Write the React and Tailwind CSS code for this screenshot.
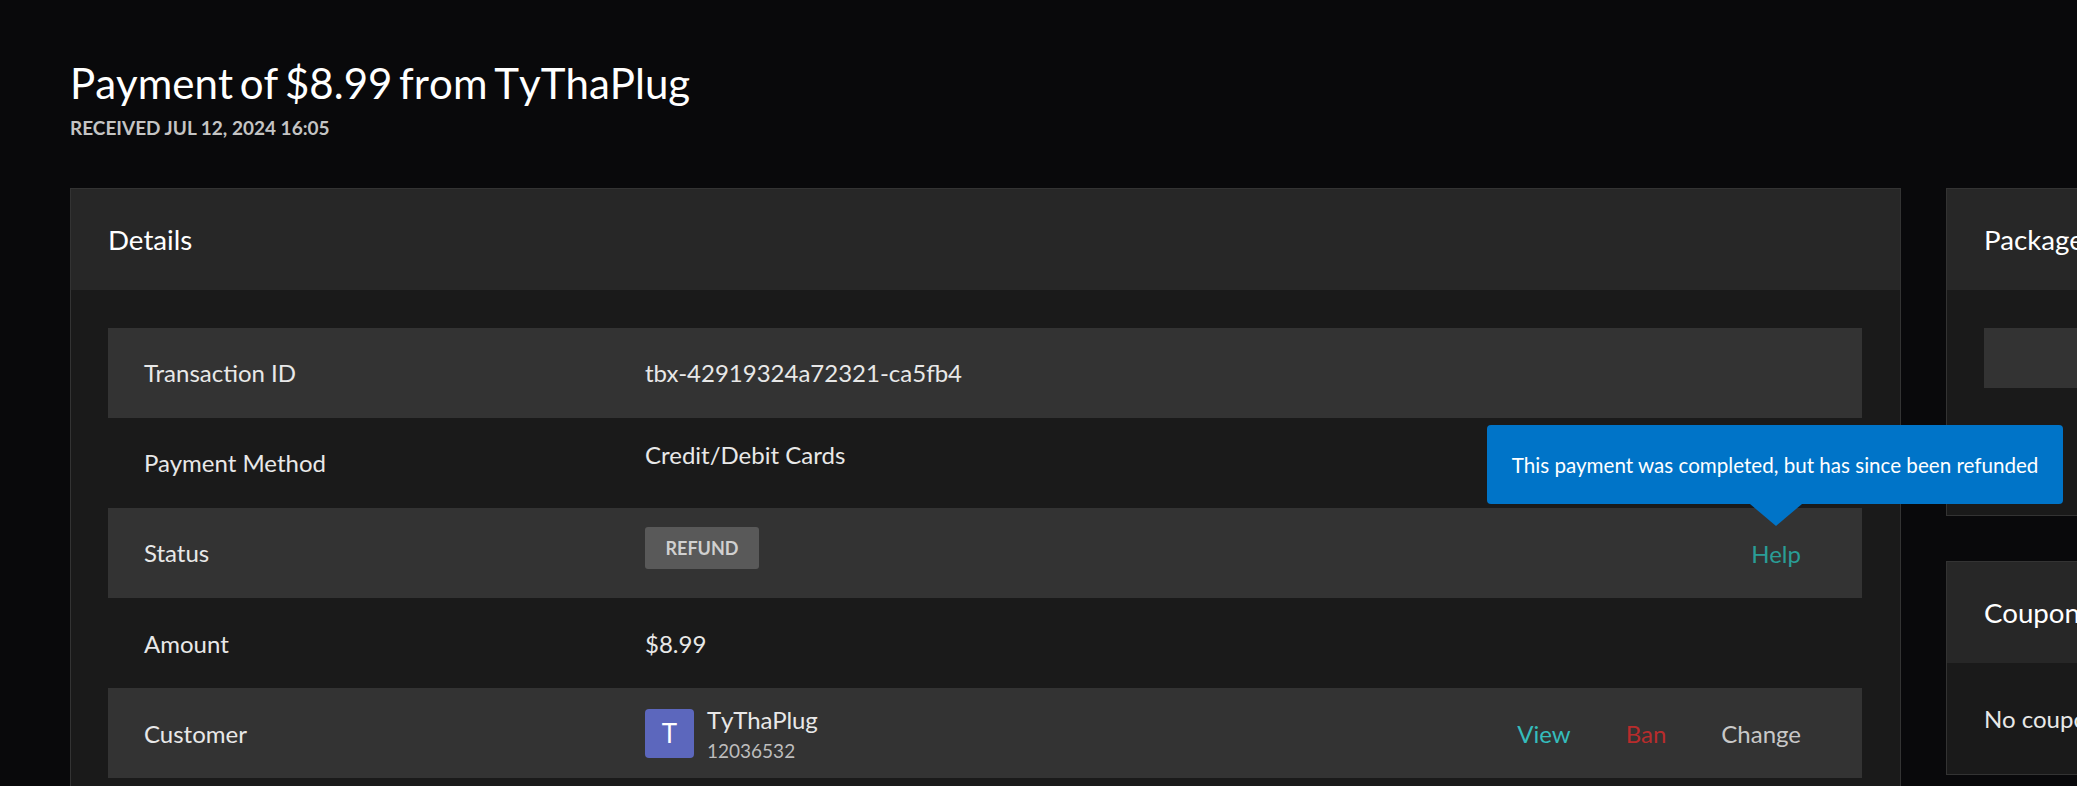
function Row({ shade, low, label, children, actions }) {
  return (
    <div className={`flex h-[90px] items-center pl-9 pr-[61px] text-[24px] leading-[30px] ${shade ? "bg-[#333333]" : ""}`}>
      <div className={`w-[501px] shrink-0 text-[#e8e8e8] ${low ? "pt-[2px]" : ""}`}>{label}</div>
      <div className="flex-1 text-[#e8e8e8]">{children}</div>
      {actions}
    </div>
  );
}

function Card({ title, className, children }) {
  return (
    <section className={`border border-[#333333] bg-[#1a1a1a] ${className}`}>
      <h2 className="flex h-[101px] items-center bg-[#272727] pl-[37px] text-[27.7px] font-normal text-white whitespace-nowrap">{title}</h2>
      {children}
    </section>
  );
}

export default function App() {
  return (
    <div className="h-[786px] w-[2077px] overflow-hidden bg-[#09090b] px-[70px] pt-[56px] font-['Lato','Liberation_Sans',sans-serif]">
      <h1 className="text-[42px] leading-[54px] font-normal [font-kerning:none] [word-spacing:-4px] text-white">Payment of $8.99 from TyThaPlug</h1>
      <p className="mt-[6px] text-[19px] leading-[24px] font-bold text-[#c4c4c4] uppercase">Received Jul 12, 2024 16:05</p>
      <div className="mt-[48px] flex gap-[45px]">
        <Card title="Details" className="w-[1831px] shrink-0 h-[640px]">
          <div className="pl-[37px] pr-[38px] pt-[38px]">
            <Row shade label="Transaction ID">tbx-42919324a72321-ca5fb4</Row>
            <Row label="Payment Method"><div className="pb-4">Credit/Debit Cards</div></Row>
            <Row
              shade
              label="Status"
              actions={
                <span className="relative pt-[2px] text-[#2a9d96]">
                  Help
                  <span className="absolute bottom-[65px] left-[calc(50%-1px)] -translate-x-1/2 flex h-[79px] w-[576px] items-center justify-center rounded-[4px] bg-[#0074c8] text-[20.6px] whitespace-nowrap text-white">
                    This payment was completed, but has since been refunded
                    <span className="absolute top-full left-[calc(50%+1px)] -translate-x-1/2 border-x-[26px] border-t-[22px] border-x-transparent border-t-[#0074c8]" />
                  </span>
                </span>
              }
            >
              <div className="pb-[10px]">
                <span className="inline-flex h-[42px] w-[114px] items-center justify-center rounded-[3px] bg-[#595959] text-[18px] font-bold text-[#d0d0d0]">REFUND</span>
              </div>
            </Row>
            <Row low label="Amount"><div className="pt-[2px]">$8.99</div></Row>
            <Row
              shade
              low
              label="Customer"
              actions={
                <div className="flex gap-[55px] pt-[2px]">
                  <span className="text-[#35bcbc]">View</span>
                  <span className="text-[#b82c2c]">Ban</span>
                  <span className="text-[#c8c8c8]">Change</span>
                </div>
              }
            >
              <div className="flex items-center gap-[13px]">
                <div className="flex size-[49px] items-center justify-center rounded-[4px] bg-[#5c67bd] text-[26px] text-white">T</div>
                <div className="pt-[4px]">
                  <div className="text-[24px] leading-[30px] tracking-[-0.15px] [font-kerning:none] text-[#e8e8e8]">TyThaPlug</div>
                  <div className="text-[19px] leading-[28px] pt-[2px] text-[#bdbdbd]">12036532</div>
                </div>
              </div>
            </Row>
          </div>
        </Card>
        <div className="flex w-[600px] shrink-0 flex-col gap-[45px]">
          <Card title="Packages" className="h-[328px]">
            <div className="mx-[37px] mt-[38px] h-[60px] bg-[#333333]" />
          </Card>
          <Card title="Coupons" className="h-[214px]">
            <p className="px-[37px] pt-[41px] text-[24px] leading-[30px] text-[#e8e8e8]">No coupons</p>
          </Card>
        </div>
      </div>
    </div>
  );
}
